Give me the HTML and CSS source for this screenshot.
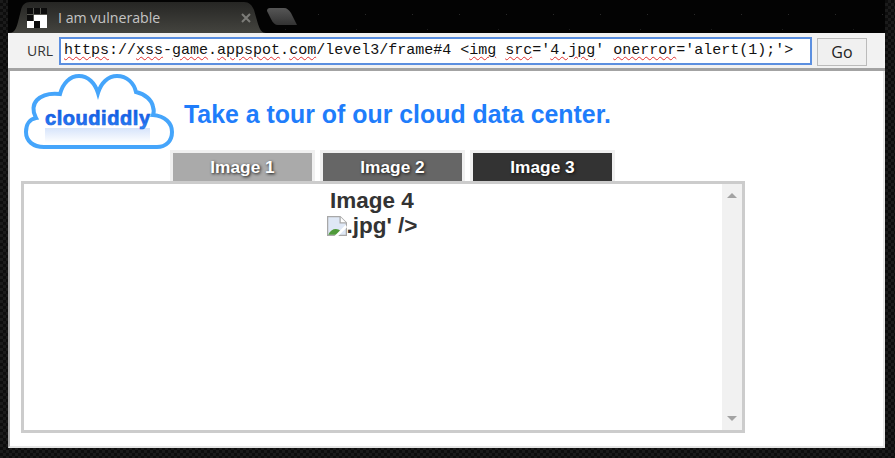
FILE: index.html
```html
<!DOCTYPE html>
<html lang="en">
	<head>
		<meta charset="UTF-8" />
		<title>I am vulnerable</title>
		<link rel="stylesheet" href="styles.css">
	</head>
	<body>
		<div class="window">
			<div class="tabstrip">
				<div class="tab">
					<svg class="favicon" width="20" height="20" viewBox="0 0 60 60" shape-rendering="crispEdges">
						<rect x="1" y="1" width="18" height="18" fill="#0c0c0c" />
						<rect x="21" y="1" width="18" height="18" fill="#0c0c0c" />
						<rect x="41" y="1" width="18" height="18" fill="#0c0c0c" />
						<rect x="1" y="21" width="18" height="18" fill="#0c0c0c" />
						<rect x="21" y="20" width="39" height="20" fill="#fff" />
						<rect x="0" y="40" width="20" height="20" fill="#fff" />
						<rect x="20" y="40" width="20" height="20" fill="#0c0c0c" />
						<rect x="40" y="40" width="20" height="20" fill="#fff" />
					</svg>
					<span class="tab-title">I am vulnerable</span>
					<svg class="tab-close" width="10" height="10" viewBox="0 0 10 10">
						<path d="M1 1 L9 9 M9 1 L1 9" />
					</svg>
				</div>
				<div class="newtab"></div>
			</div>

			<div class="toolbar">
				<span class="url-label">URL</span>
				<div class="url-box"><span class="typo">https</span>://<span class="typo">xss</span>-<span class="typo">game</span>.<span class="typo">appspot</span>.<span class="typo">com</span>/level3/frame#4 &lt;<span class="typo">img</span> <span class="typo">src</span>='<span class="typo">4.jpg</span>' <span class="typo">onerror</span>='alert(1);'&gt;</div>
				<button class="go">Go</button>
			</div>

			<div class="page">
				<div class="header">
					<svg class="logo" width="154" height="80" viewBox="0 0 154 80">
						<defs>
							<linearGradient id="logoFill" x1="0" y1="0" x2="0" y2="1">
								<stop offset="0" stop-color="#1450d8" />
								<stop offset="0.55" stop-color="#1a6cf0" />
								<stop offset="1" stop-color="#2f8cf8" />
							</linearGradient>
							<linearGradient id="logoFade" x1="0" y1="0" x2="0" y2="1">
								<stop offset="0" stop-color="#6f9ff0" stop-opacity="0.28" />
								<stop offset="1" stop-color="#6f9ff0" stop-opacity="0" />
							</linearGradient>
						</defs>
						<path class="cloud" d="M23 74 C12 74 5 68 5 59 C5 51 9 46 15 45 C11 38 12 31 16 27 C21 22 30 20 39 21 C42 10 49 3 58 3 C67 3 74 10 77 20 C80 10 87 3 96 3 C106 3 113 10 115 19 C124 21 131 27 132 34 C133 37 133 40 132 42 C144 43 151 50 151 59 C151 68 145 74 136 74 Z" />
						<rect x="24" y="55" width="105" height="15" fill="url(#logoFade)" />
						<text class="logo-text" x="24" y="52" textLength="105" lengthAdjust="spacing" fill="url(#logoFill)">cloudiddly</text>
					</svg>
					<h1>Take a tour of our cloud data center.</h1>
				</div>

				<div class="tabs">
					<div class="pic-tab pic-1">Image 1</div>
					<div class="pic-tab pic-2">Image 2</div>
					<div class="pic-tab pic-3">Image 3</div>
				</div>

				<div class="frame">
					<div class="frame-body">
						<div>Image 4</div>
						<div>
							<svg class="broken" width="20" height="20" viewBox="0 0 16 16">
								<path d="M0.5 0.5 H10.5 L15.5 5.5 V15.5 H0.5 Z" fill="#dfe8f6" stroke="#a8a8a8" />
								<path d="M10.5 0.5 V5.5 H15.5" fill="#fff" stroke="#a8a8a8" />
								<path d="M1 15 C3 10 8 9 11 12 L8 15 Z" fill="#4f9a3a" />
								<path d="M6 16 L15 7 L16 9 L9 16 Z" fill="#fff" />
							</svg>.jpg' /&gt;
						</div>
					</div>
					<div class="scrollbar">
						<span class="arrow-up"></span>
						<span class="arrow-down"></span>
					</div>
				</div>
			</div>
		</div>
	</body>
</html>
```

FILE: styles.css
```css
html,
body {
	height: 100%;
}

body {
	margin: 0;
	overflow: hidden;
	font-family: "Liberation Sans", Arial, sans-serif;
	background-color: #1b1b1b;
	background-image:
		linear-gradient(45deg, #0d0d0d 25%, transparent 25%, transparent 75%, #0d0d0d 75%),
		linear-gradient(45deg, #0d0d0d 25%, transparent 25%, transparent 75%, #0d0d0d 75%);
	background-size: 6px 6px;
	background-position: 0 0, 3px 3px;
}

.window {
	width: 877px;
	margin-left: 8px;
}

/* browser chrome */
.tabstrip {
	display: flex;
	align-items: flex-start;
	height: 33px;
	background-color: #030303;
	background-image:
		radial-gradient(circle, #2a2a2a 0.6px, transparent 1px),
		radial-gradient(circle, #1e1e1e 0.6px, transparent 1px);
	background-size: 47px 23px, 71px 31px;
	background-position: 5px 3px, 29px 14px;
}

.tab {
	display: flex;
	align-items: center;
	box-sizing: border-box;
	width: 258px;
	height: 31px;
	margin-top: 2px;
	padding: 0 15px 0 19px;
	background: linear-gradient(#262624, #44443f);
	clip-path: path("M0 31 C6 31 8 28 10 20 L13 8 C14 3 17 0 22 0 L236 0 C241 0 244 3 246 8 L250 22 C252 28 254 31 258 31 Z");
}

.favicon {
	flex: none;
	background: #55554f;
}

.tab-title {
	flex: 1;
	margin-left: 11px;
	font-family: "Open Sans", sans-serif;
	font-size: 14.2px;
	color: #c4c4c4;
}

.tab-close path {
	fill: none;
	stroke: #7c7c78;
	stroke-width: 2;
}

.newtab {
	width: 30px;
	height: 17px;
	margin: 8px 0 0 1px;
	background: linear-gradient(#565656, #333);
	clip-path: path("M3 0 L17 0 C20 0 22 2 24 5 L30 17 L11 17 C8 17 6 15 4 11 L0 3 C0 1 1 0 3 0 Z");
}

.toolbar {
	display: flex;
	align-items: flex-start;
	box-sizing: border-box;
	height: 38px;
	padding: 4px 0 0 19px;
	background: #f2f2f2;
	border-bottom: 3px solid #a3a3a3;
}

.url-label {
	flex: none;
	width: 32px;
	font-family: "Open Sans", sans-serif;
	font-size: 14px;
	line-height: 28px;
	color: #333;
}

.url-box {
	flex: none;
	box-sizing: border-box;
	width: 753px;
	height: 28px;
	padding-left: 3px;
	background: white;
	border: 2px solid #5b8fe0;
	font-family: "Liberation Mono", monospace;
	font-size: 15px;
	line-height: 24px;
	white-space: pre;
	color: #111;
}

.typo {
	text-decoration: underline wavy #e03030 1px;
	text-underline-offset: 2px;
}

.go {
	flex: none;
	box-sizing: border-box;
	width: 50px;
	height: 28px;
	margin: 1px 0 0 5px;
	padding: 0;
	background: #f0f0f0;
	border: 1px solid #bbb;
	font-family: "Open Sans", sans-serif;
	font-size: 16px;
	color: #222;
}

/* page content */
.page {
	box-sizing: border-box;
	height: 377px;
	padding-left: 11px;
	background: white;
	border-left: 2px solid #a8a8a8;
	border-right: 2px solid #e8e8e8;
	border-bottom: 2px solid #e5e5e5;
}

.header {
	display: flex;
	align-items: flex-start;
	box-sizing: border-box;
	height: 79px;
	padding-top: 2px;
}

.logo {
	flex: none;
}

.cloud {
	fill: white;
	stroke: #45a5fb;
	stroke-width: 4;
}

.logo-text {
	font-size: 20px;
	font-weight: bold;
	stroke: #1a60e0;
	stroke-width: 0.7;
}

h1 {
	margin: 27px 0 0 9px;
	font-size: 24.9px;
	font-weight: bold;
	color: #1f7dfb;
}

.tabs {
	display: flex;
	gap: 5px;
	height: 31px;
	padding-left: 149px;
}

.pic-tab {
	box-sizing: border-box;
	width: 145px;
	height: 31px;
	border: 3px solid #f0f0f0;
	border-bottom: none;
	font-size: 17.3px;
	font-weight: bold;
	line-height: 28px;
	text-align: center;
	color: white;
	text-shadow: 1px 1px 3px #111;
}

.pic-1 {
	background: #aaa;
}

.pic-2 {
	background: #666;
}

.pic-3 {
	background: #333;
}

.frame {
	display: flex;
	box-sizing: border-box;
	width: 724px;
	height: 252px;
	border: 3px solid #ccc;
}

.frame-body {
	flex: 1;
	padding: 4px 2px 0 0;
	font-size: 22.5px;
	font-weight: bold;
	line-height: 25px;
	text-align: center;
	color: #333;
}

.broken {
	vertical-align: -3px;
}

.scrollbar {
	display: flex;
	flex-direction: column;
	align-items: center;
	justify-content: space-between;
	box-sizing: border-box;
	width: 20px;
	padding: 9px 0;
	background: #f1f1f1;
}

.arrow-up {
	border: 5px solid transparent;
	border-top: none;
	border-bottom-color: #a3a3a3;
}

.arrow-down {
	border: 5px solid transparent;
	border-bottom: none;
	border-top-color: #a3a3a3;
}
```
